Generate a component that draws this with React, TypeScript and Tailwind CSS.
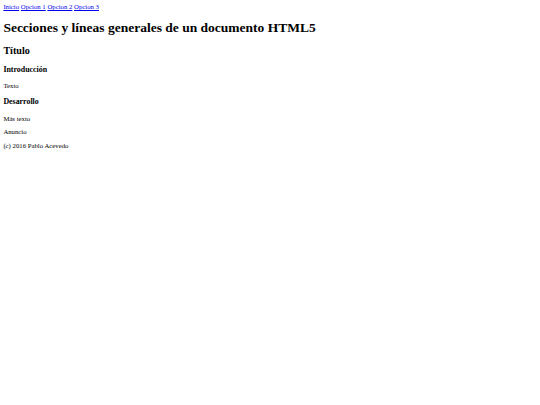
export default function App() {
    const links = ['Inicio', 'Opcion 1', 'Opcion 2', 'Opcion 3'];

    return (
        <div className="bg-white min-h-screen flow-root">
            <div className="m-[3.375px] font-['Liberation_Serif',serif] text-[6.75px] leading-[normal] text-black">
                {/* Header */}
                <header>
                    <nav>
                        {links.map((l, i) => (
                            <span key={l}>
                                <a href="#" className="text-[#0000ee] underline">{l}</a>
                                {i < links.length - 1 ? ' ' : ''}
                            </span>
                        ))}
                    </nav>
                    <h1 className="text-[13.5px] font-bold mt-[10px] mb-[9.045px]">
                        Secciones y líneas generales de un documento HTML5
                    </h1>
                </header>

                {/* Main content */}
                <section>
                    <h2 className="text-[10.125px] font-bold my-[8.4px]">Título</h2>
                    <article>
                        <h3 className="text-[7.9px] font-bold mt-[7.9px] mb-[8.4px]">Introducción</h3>
                        <p className="my-[6.75px]">Texto</p>
                    </article>
                    <article>
                        <h3 className="text-[7.9px] font-bold mt-[7.9px] mb-[8.6px]">Desarrollo</h3>
                        <p className="my-[6.75px]">Más texto</p>
                    </article>
                </section>

                <aside>
                    <p className="my-[6.75px]">Anuncio</p>
                </aside>

                <footer>
                    <p className="my-[6.75px]">(c) 2016 Pablo Acevedo</p>
                </footer>
            </div>
        </div>
    );
}
